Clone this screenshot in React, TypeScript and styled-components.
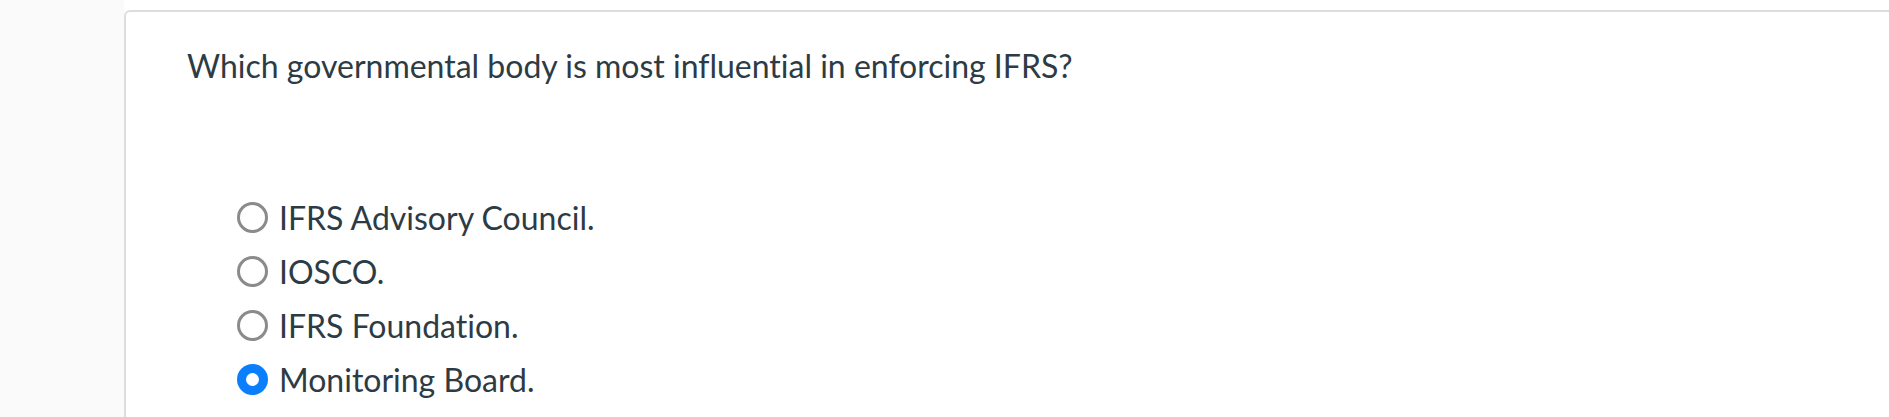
import styled, { createGlobalStyle } from "styled-components"

const GlobalStyle = createGlobalStyle`
  html, body {
    margin: 0;
    padding: 0;
    background: #ffffff;
  }
  body {
    font-family: Lato, "Open Sans", sans-serif;
    color: #2d3b45;
    overflow: hidden;
    font-variant-ligatures: no-common-ligatures;
  }
`

const Page = styled.div`
  display: flex;
  width: 1889px;
  height: 417px;
  overflow: hidden;
`

const Sidebar = styled.aside`
  width: 124px;
  flex-shrink: 0;
  background: #fafafa;
`

const Main = styled.main`
  flex: 1;
  padding-top: 10px;
  overflow: hidden;
`

const Card = styled.section`
  width: calc(100% + 40px);
  min-height: 420px;
  border: 2px solid #dddddd;
  border-radius: 6px;
  box-sizing: border-box;
  padding: 36px 0 0 61px;
`

const Question = styled.h2`
  margin: 0;
  font-size: 32px;
  font-weight: 400;
  line-height: 36px;
  color: #2d3b45;
`

const Options = styled.div`
  display: flex;
  flex-direction: column;
  margin-top: 106px;
  padding-left: 50px;
`

const Option = styled.label`
  display: flex;
  align-items: center;
  gap: 11px;
  height: 54px;
  font-size: 32px;
  color: #2d3b45;
  cursor: pointer;
`

const Radio = styled.span<{ $checked?: boolean }>`
  width: 31px;
  height: 31px;
  box-sizing: border-box;
  border-radius: 50%;
  flex-shrink: 0;
  background: #ffffff;
  border: ${(p) => (p.$checked ? "9.5px solid #0b7ffb" : "3px solid #8b8b8b")};
`

const options = [
  { text: "IFRS Advisory Council.", checked: false },
  { text: "IOSCO.", checked: false },
  { text: "IFRS Foundation.", checked: false },
  { text: "Monitoring Board.", checked: true },
]

export default function App() {
  return (
    <>
      <GlobalStyle />
      <Page>
        <Sidebar />
        <Main>
          <Card>
            <Question>Which governmental body is most influential in enforcing IFRS?</Question>
            <Options role="radiogroup">
              {options.map((o) => (
                <Option key={o.text}>
                  <Radio $checked={o.checked} aria-hidden />
                  {o.text}
                </Option>
              ))}
            </Options>
          </Card>
        </Main>
      </Page>
    </>
  )
}
